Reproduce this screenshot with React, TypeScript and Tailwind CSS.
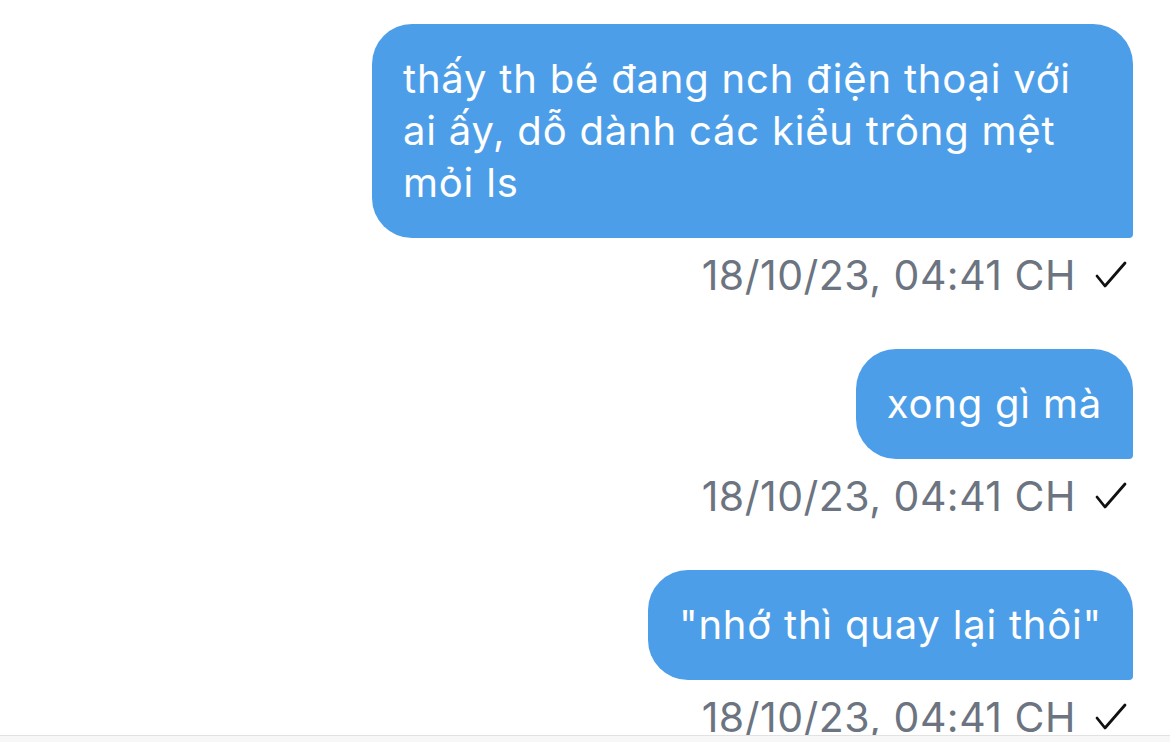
import React from 'react'

const messages = [
  { text: 'thấy th bé đang nch điện thoại với ai ấy, dỗ dành các kiểu trông mệt mỏi ls', time: '18/10/23, 04:41 CH' },
  { text: 'xong gì mà', time: '18/10/23, 04:41 CH' },
  { text: '"nhớ thì quay lại thôi"', time: '18/10/23, 04:41 CH' },
]

const Check = () => (
  <svg width='32' height='28' viewBox='0 0 32 28' fill='none' className='shrink-0'>
    <path d='M2 15 L10 25 L30 2' stroke='#111' strokeWidth='2.8' strokeLinecap='round' strokeLinejoin='round' />
  </svg>
)

export default function App() {
  return (
    <div className='w-full h-[742px] flex flex-col bg-white overflow-hidden' style={{ fontFamily: 'Inter, "Noto Sans", sans-serif' }}>
      <div className='h-[735px] shrink-0 overflow-hidden pt-[24px] pr-[37px] flex flex-col items-end'>
        {messages.map((m, i) => (
          <div key={i} className='flex flex-col items-end mb-[52px]'>
            <div className='max-w-[761px] bg-[#4d9ee8] text-white text-[40px] tracking-[0.8px] leading-[52px] px-[31px] py-[29px] rounded-[40px] rounded-br-[4px]'>
              {m.text}
            </div>
            <div className='mt-[15px] flex items-center gap-[19px] pr-[6px] h-[44px]'>
              <span className='text-[41px] tracking-[0.5px] leading-[44px] text-[#6b7480]'>{m.time}</span>
              <Check />
            </div>
          </div>
        ))}
      </div>
      <div className='flex-1 border-t border-[#e2e2e2] bg-[#f7f7f7]' />
    </div>
  )
}
